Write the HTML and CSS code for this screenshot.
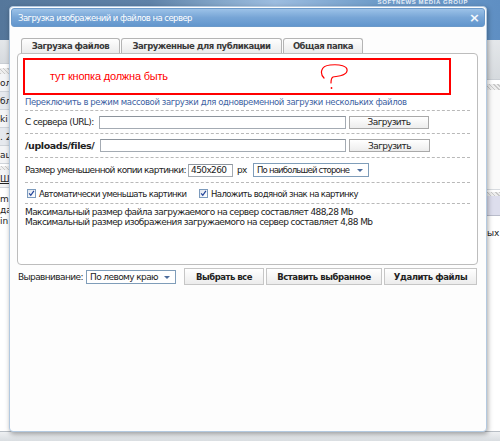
FILE: index.html
```html
<!DOCTYPE html>
<html lang="ru">
<head>
<meta charset="utf-8">
<title>Загрузка изображений и файлов на сервер</title>
<link rel="stylesheet" href="styles.css">
</head>
<body>
<div class="page">
  <div class="page-head">
    <div class="head-left"></div>
    <div class="head-logo">
      <span class="brand-small">SOFTNEWS MEDIA GROUP</span>
    </div>
  </div>
  <div class="page-main">
    <div class="col-left">
      <div class="menu-grey"></div>
      <div class="hatch"></div>
      <div class="frag">ол</div>
      <div class="frag alt">бл</div>
      <div class="frag">ki</div>
      <div class="frag alt">. 2</div>
      <div class="frag">ац</div>
      <div class="hatch small"></div>
      <div class="frag"><u>Ш</u></div>
      <div class="frag-list">m<br>да<br>in</div>
    </div>
    <div class="col-right">
      <div class="menu-grey"></div>
      <div class="hatch"></div>
      <div class="pane-light"></div>
      <div class="hatch small"></div>
      <div class="lavender"></div>
      <div class="frag-r">ых</div>
    </div>
  </div>
  <div class="page-foot"></div>
</div>

<div class="dialog">
  <div class="title">
    <span>Загрузка изображений и файлов на сервер</span>
    <span class="close">×</span>
  </div>
  <div class="content">
    <div class="tabs">
      <div class="tab t1">Загрузка файлов</div>
      <div class="tab t2">Загруженные для публикации</div>
      <div class="tab t3">Общая папка</div>
    </div>
    <div class="panel">
      <div class="redbox">
        <span>тут кнопка должна быть</span>
        <svg class="qmark" width="30" height="30" viewBox="0 0 30 30">
          <path d="M4 16 C0 12 0 4 10 3 C20 2 28 4 27 9 C26 14 18 14 13 15 C11 16 11 19 11 21" fill="none" stroke="#f00" stroke-width="1.2" stroke-linecap="round"/>
          <circle cx="11.5" cy="26" r="0.9" fill="#f00"/>
        </svg>
      </div>
      <div class="row link-row"><a class="link">Переключить в режим массовой загрузки для одновременной загрузки нескольких файлов</a></div>
      <div class="row r-url">
        <span class="lbl l-url">С сервера (URL):</span>
        <span class="field f-url"></span>
        <span class="btn-s">Загрузить</span>
      </div>
      <div class="row r-up">
        <span class="lbl l-up">/uploads/files/</span>
        <span class="field f-up"></span>
        <span class="btn-s b-up">Загрузить</span>
      </div>
      <div class="row r-size">
        <span class="lbl l-size">Размер уменьшенной копии картинки:</span>
        <span class="field f-size">450x260</span>
        <span class="px">px</span>
        <span class="select s-side">По наибольшей стороне<i class="arrow"></i></span>
      </div>
      <div class="row cb-row">
        <span class="cb"><svg width="9" height="9" viewBox="0 0 9 9"><path d="M1.5 4.2 L3.6 6.8 L7.6 1.2" fill="none" stroke="#21449a" stroke-width="1.6"/></svg></span>
        <span class="cb-lbl c1">Автоматически уменьшать картинки</span>
        <span class="cb cb2"><svg width="9" height="9" viewBox="0 0 9 9"><path d="M1.5 4.2 L3.6 6.8 L7.6 1.2" fill="none" stroke="#21449a" stroke-width="1.6"/></svg></span>
        <span class="cb-lbl">Наложить водяной знак на картинку</span>
      </div>
      <div class="info">
        <div>Максимальный размер файла загружаемого на сервер составляет 488,28 Mb</div>
        <div>Максимальный размер изображения загружаемого на сервер составляет 4,88 Mb</div>
      </div>
    </div>
    <div class="bottom">
      <span class="lbl l-align">Выравнивание:</span>
      <span class="select s-align">По левому краю<i class="arrow"></i></span>
      <span class="btn b1">Выбрать все</span>
      <span class="btn b2">Вставить выбранное</span>
      <span class="btn b3">Удалить файлы</span>
    </div>
  </div>
</div>
</body>
</html>
```
FILE: styles.css
```css
* { box-sizing: border-box; }
html, body { margin: 0; padding: 0; }
body {
  width: 500px;
  height: 441px;
  overflow: hidden;
  position: relative;
  font-family: "DejaVu Sans", Verdana, sans-serif;
  font-size: 9px;
  letter-spacing: -0.6px;
  color: #222;
  background: #f4f5f7;
}

/* background page */
.page { display: flex; flex-direction: column; height: 441px; }
.page-head {
  height: 40px;
  display: flex;
  background: linear-gradient(90deg, #55779b 0%, #5f82a8 30%, #86a9cc 45%, #9dbde0 55%, #6f9cc9 75%, #5f8fc3 100%);
}
.head-left { flex: 1; }
.head-logo {
  width: 150px;
  display: flex;
  flex-direction: column;
  align-items: flex-end;
  padding-right: 32px;
  color: #e6eef8;
  font-family: "Liberation Sans", Arial, sans-serif;
  font-weight: bold;
  letter-spacing: 0;
}
.brand-small { font-size: 6px; line-height: 5px; letter-spacing: 0.6px; }
.page-main { flex: 1; display: flex; justify-content: space-between; }
.col-left, .col-right { width: 14px; display: flex; flex-direction: column; background: #fff; overflow: hidden; }
.menu-grey { height: 24px; background: linear-gradient(#e4e7ea, #d6dade); border-bottom: 1px solid #c9ced4; }
.hatch { height: 6px; margin-top: 4px; background: repeating-linear-gradient(45deg, #c9c9c9 0 1px, #eeeeee 1px 3px); }
.hatch.small { height: 4px; margin-top: 2px; }
.frag {
  height: 18px; line-height: 18px; font-size: 9px; color: #222; letter-spacing: 0;
  border-bottom: 1px solid #cfd4da; background: #f3f4f6; overflow: hidden; white-space: nowrap;
}
.frag.alt { background: #e6e9ee; }
.frag-list { padding-top: 6px; line-height: 11px; font-size: 9px; letter-spacing: 0; }
.col-right .menu-grey { height: 40px; }
.pane-light { height: 100px; background: #fafafa; border-bottom: 1px solid #d7dbe0; }
.lavender { height: 20px; background: #dddeed; border-bottom: 1px solid #b9bccb; }
.frag-r { padding-top: 12px; font-size: 9px; white-space: nowrap; padding-left: 1px; letter-spacing: 0; }
.page-foot { height: 10px; background: linear-gradient(#eef0f2, #d9dde1); border-top: 1px solid #b8bec5; }

/* dialog */
.dialog {
  position: absolute;
  left: 9px;
  top: 6px;
  width: 478px;
  height: 426px;
  background: #fdfdfd;
  border: 1px solid #b3c9e0;
  border-radius: 4px;
  padding: 1px;
  box-shadow: 1px 2px 5px rgba(0, 0, 0, 0.35);
}
.title {
  height: 19px;
  border-radius: 3px;
  border: 1px solid #6b99c9;
  background: linear-gradient(#9cc2e8, #77a5d6 50%, #6296cd);
  color: #fff;
  font-size: 8.5px;
  letter-spacing: -0.55px;
  padding: 0 4px 0 6px;
  display: flex;
  align-items: center;
  justify-content: space-between;
}
.close { font-size: 13px; font-weight: bold; line-height: 13px; color: #f4f8fc; letter-spacing: 0; }

.content { padding: 11px 7px 0 6px; }
.tabs { display: flex; padding-left: 4px; }
.tab {
  height: 15px;
  border: 1px solid #b4b4b4;
  border-bottom: 0;
  border-radius: 3px 3px 0 0;
  background: linear-gradient(#fefefe, #ebebeb);
  font-weight: bold;
  color: #3a3a3a;
  font-size: 8.5px;
  letter-spacing: -0.5px;
  display: flex;
  align-items: center;
  justify-content: center;
  margin-right: 1px;
  white-space: nowrap;
}
.t1 { width: 99px; }
.t2 { width: 161px; }
.t3 { width: 80px; }

.panel {
  height: 212px;
  border: 1px solid #bdbdbd;
  border-radius: 4px;
  background: #fff;
  padding: 4px 7px 0 7px;
}
.redbox {
  position: relative;
  width: 428px;
  height: 37px;
  margin-left: -2px;
  border: 2px solid #f00;
  display: flex;
  align-items: center;
  padding: 0 0 2px 25px;
  color: #f00;
  font-family: "Liberation Sans", Arial, sans-serif;
  font-size: 11px;
  letter-spacing: -0.2px;
}
.qmark { position: absolute; left: 295px; top: 2px; }

.row {
  display: flex;
  align-items: center;
  border-bottom: 1px dashed #b9b9b9;
}
.link-row { height: 16px; padding-bottom: 1px; }
.link { color: #3d62a2; font-size: 8.5px; letter-spacing: -0.4px; white-space: nowrap; }
.r-url { height: 23px; }
.r-up { height: 24px; }
.r-size { height: 25px; }
.cb-row { height: 21px; padding-top: 1px; }
.lbl { white-space: nowrap; }
.l-url { width: 74px; }
.l-up { width: 75px; font-weight: bold; font-size: 9.5px; letter-spacing: -0.4px; }
.l-size { width: 163px; letter-spacing: -0.7px; }
.field {
  height: 13px;
  border: 1px solid #a4abb3;
  border-top-color: #8d949c;
  background: #fff;
  font-size: 9px;
  line-height: 11px;
  padding-left: 2px;
}
.f-url { width: 247px; }
.f-up { width: 246px; }
.f-size { width: 45px; }
.px { margin-left: 4px; width: 16px; }
.btn-s {
  height: 13px;
  width: 80px;
  margin-left: 3px;
  border: 1px solid #a9a9a9;
  background: linear-gradient(#ffffff, #ededed);
  display: flex;
  align-items: center;
  justify-content: center;
  font-size: 9px;
}
.b-up { width: 81px; }
.select {
  position: relative;
  height: 14px;
  border: 1px solid #7f9db9;
  background: #fff;
  padding-left: 3px;
  display: flex;
  align-items: center;
  white-space: nowrap;
}
.s-side { width: 116px; font-size: 8.5px; letter-spacing: -0.8px; }
.arrow {
  position: absolute;
  right: 5px;
  top: 5px;
  width: 0;
  height: 0;
  border-left: 3px solid transparent;
  border-right: 3px solid transparent;
  border-top: 3px solid #4d6c9c;
}
.cb {
  flex: none;
  width: 9px;
  height: 9px;
  margin-left: 2px;
  border: 1px solid #7c9bbd;
  background: linear-gradient(135deg, #dfe5ee, #ffffff);
  display: flex;
  align-items: center;
  justify-content: center;
}
.cb svg { display: block; }
.cb2 { margin-left: 9px; }
.cb-lbl { margin-left: 3px; white-space: nowrap; font-size: 8.5px; letter-spacing: -0.6px; }
.c1 { flex: none; width: 151px; }

.info { padding-top: 3px; line-height: 10px; }

.bottom {
  display: flex;
  align-items: center;
  margin-top: 3px;
  height: 17px;
}
.l-align { margin-left: 1px; width: 68px; }
.s-align { width: 90px; }
.btn {
  height: 17px;
  border: 1px solid #c6c6c6;
  background: linear-gradient(#ffffff, #ececec);
  font-weight: bold;
  font-size: 8.5px;
  letter-spacing: -0.4px;
  color: #222;
  display: flex;
  align-items: center;
  justify-content: center;
  margin-left: 2px;
  white-space: nowrap;
}
.b1 { width: 80px; margin-left: 8px; letter-spacing: -0.5px; }
.b2 { width: 116px; }
.b3 { width: 93px; }
```
